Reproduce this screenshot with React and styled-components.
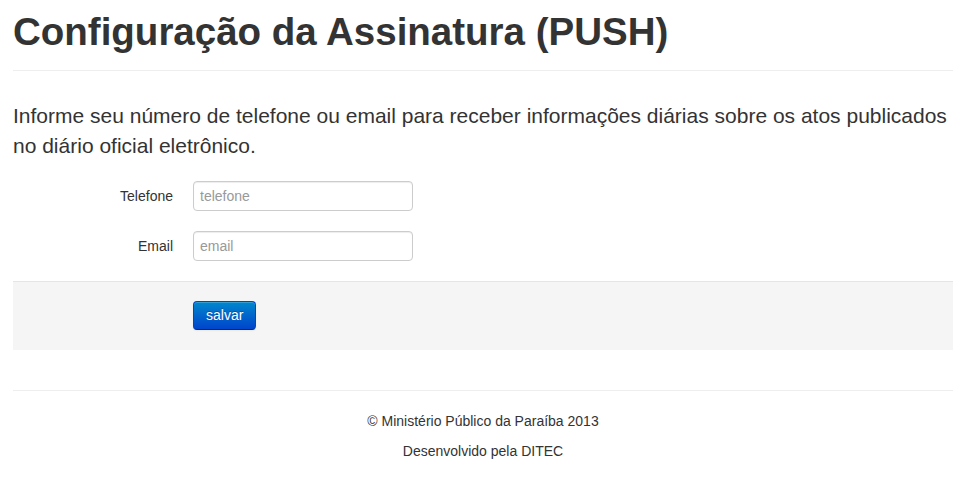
import React from "react";
import styled, { createGlobalStyle } from "styled-components";

const Global = createGlobalStyle`
  html, body { margin: 0; padding: 0; background: #fff; }
  body {
    font-family: "Liberation Sans", Arial, sans-serif;
    font-size: 14px;
    line-height: 20px;
    color: #333;
  }
  * { box-sizing: content-box; }
`;

const Container = styled.div`
  width: 940px;
  margin: 0 13px;
`;

const PageHeader = styled.div`
  margin: 0 0 30px;
  padding: 12px 0 18px;
  border-bottom: 1px solid #eee;
`;

const Title = styled.h1`
  margin: 0;
  font-size: 38.5px;
  line-height: 40px;
  font-weight: bold;
  color: #333;
`;

const Lead = styled.p`
  margin: 0 0 20px;
  font-size: 21px;
  line-height: 30px;
  font-weight: normal;
`;

const Form = styled.form`
  margin: 0;
`;

const ControlGroup = styled.div`
  display: flex;
  margin-bottom: 20px;
`;

const ControlLabel = styled.label`
  width: 160px;
  padding-top: 5px;
  text-align: right;
  margin-right: 20px;
`;

const Input = styled.input`
  width: 206px;
  height: 20px;
  padding: 4px 6px;
  margin: 0;
  font-family: "Liberation Sans", Arial, sans-serif;
  font-size: 14px;
  line-height: 20px;
  color: #555;
  border: 1px solid #ccc;
  border-radius: 4px;
  box-shadow: inset 0 1px 1px rgba(0, 0, 0, 0.075);
  outline: none;
  &::placeholder { color: #999; }
`;

const FormActions = styled.div`
  padding: 19px 20px 20px 180px;
  background: #f5f5f5;
  border-top: 1px solid #e5e5e5;
`;

const Button = styled.button`
  display: block;
  height: 27px;
  padding: 0 12px;
  margin: 0;
  font-family: "Liberation Sans", Arial, sans-serif;
  font-size: 14px;
  line-height: 25px;
  color: #fff;
  text-shadow: 0 -1px 0 rgba(0, 0, 0, 0.25);
  background-image: linear-gradient(to bottom, #0088cc, #0044cc);
  border: 1px solid #0044cc;
  border-bottom-color: #002a80;
  border-radius: 4px;
  box-shadow: inset 0 1px 0 rgba(255, 255, 255, 0.2), 0 1px 2px rgba(0, 0, 0, 0.05);
  cursor: pointer;
`;

const Rule = styled.hr`
  margin: 40px 0 19px;
  border: 0;
  border-top: 1px solid #eee;
  border-bottom: 1px solid #fff;
`;

const Footer = styled.footer`
  text-align: center;
`;

const FooterLine = styled.p`
  margin: 0 0 10px;
`;

export default function App() {
  return (
    <>
      <Global />
      <Container>
        <PageHeader>
          <Title>Configuração da Assinatura (PUSH)</Title>
        </PageHeader>
        <Lead>
          Informe seu número de telefone ou email para receber informações diárias sobre os atos publicados no diário oficial eletrônico.
        </Lead>
        <Form onSubmit={(e) => e.preventDefault()}>
          <ControlGroup>
            <ControlLabel htmlFor="telefone">Telefone</ControlLabel>
            <Input id="telefone" type="text" placeholder="telefone" />
          </ControlGroup>
          <ControlGroup>
            <ControlLabel htmlFor="email">Email</ControlLabel>
            <Input id="email" type="text" placeholder="email" />
          </ControlGroup>
          <FormActions>
            <Button type="submit">salvar</Button>
          </FormActions>
        </Form>
        <Rule />
        <Footer>
          <FooterLine>© Ministério Público da Paraíba 2013</FooterLine>
          <FooterLine>Desenvolvido pela DITEC</FooterLine>
        </Footer>
      </Container>
    </>
  );
}
